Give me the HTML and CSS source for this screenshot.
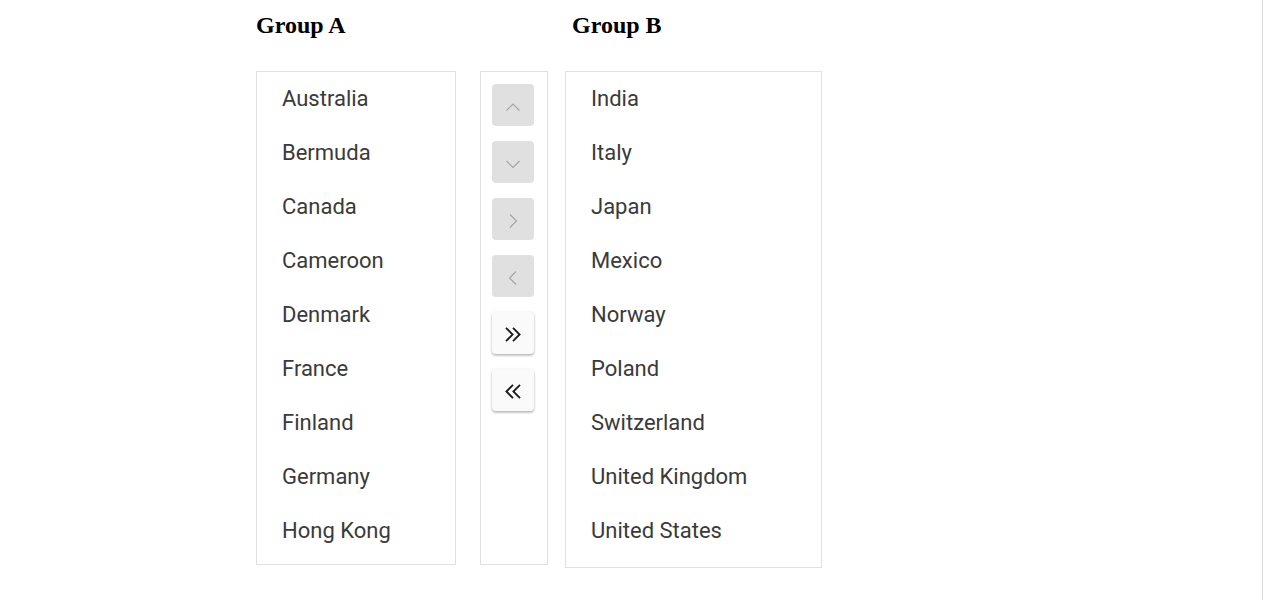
FILE: index.html
```html
<!DOCTYPE html>
<html>
<head>
<meta charset="utf-8">
<link rel="stylesheet" href="styles.css">
</head>
<body>
<div class="page">
  <div class="dual">
    <div class="col col-a">
      <h2 class="title">Group A</h2>
      <ul class="listbox list-a">
        <li>Australia</li>
        <li>Bermuda</li>
        <li>Canada</li>
        <li>Cameroon</li>
        <li>Denmark</li>
        <li>France</li>
        <li>Finland</li>
        <li>Germany</li>
        <li>Hong Kong</li>
      </ul>
    </div>
    <div class="toolbar">
      <button class="tb-btn disabled" aria-label="Move up">
        <svg class="ic" width="16" height="16" viewBox="0 0 16 16"><path d="M1.5 11.5 L8 5 L14.5 11.5" fill="none" stroke="#a3a3a3" stroke-width="1.1"/></svg>
      </button>
      <button class="tb-btn disabled" aria-label="Move down">
        <svg class="ic" width="16" height="16" viewBox="0 0 16 16"><path d="M1.5 5 L8 11.5 L14.5 5" fill="none" stroke="#a3a3a3" stroke-width="1.1"/></svg>
      </button>
      <button class="tb-btn disabled" aria-label="Move to">
        <svg class="ic" width="16" height="16" viewBox="0 0 16 16"><path d="M5 1.5 L11.5 8 L5 14.5" fill="none" stroke="#a3a3a3" stroke-width="1.1"/></svg>
      </button>
      <button class="tb-btn disabled" aria-label="Move from">
        <svg class="ic" width="16" height="16" viewBox="0 0 16 16"><path d="M11 1.5 L4.5 8 L11 14.5" fill="none" stroke="#a3a3a3" stroke-width="1.1"/></svg>
      </button>
      <button class="tb-btn" aria-label="Move all to">
        <svg class="ic" width="16" height="16" viewBox="0 0 16 16"><path d="M1 0.8 L7.6 7.5 L1 14.2 M8 0.8 L14.6 7.5 L8 14.2" fill="none" stroke="#1a1a1a" stroke-width="1.8"/></svg>
      </button>
      <button class="tb-btn" aria-label="Move all from">
        <svg class="ic" width="16" height="16" viewBox="0 0 16 16"><path d="M8 0.8 L1.4 7.5 L8 14.2 M15 0.8 L8.4 7.5 L15 14.2" fill="none" stroke="#1a1a1a" stroke-width="1.8"/></svg>
      </button>
    </div>
    <div class="col col-b">
      <h2 class="title title-b">Group B</h2>
      <ul class="listbox list-b">
        <li>India</li>
        <li>Italy</li>
        <li>Japan</li>
        <li>Mexico</li>
        <li>Norway</li>
        <li>Poland</li>
        <li>Switzerland</li>
        <li>United Kingdom</li>
        <li>United States</li>
      </ul>
    </div>
  </div>
</div>
</body>
</html>
```

FILE: styles.css
```css
html, body {
  margin: 0;
  padding: 0;
  background: #ffffff;
}

.page {
  width: 1262px;
  height: 600px;
  border-right: 1px solid #dcdcdc;
  box-sizing: content-box;
}

.dual {
  display: flex;
  align-items: flex-start;
  padding-left: 256px;
}

.col {
  display: flex;
  flex-direction: column;
}

.col-a {
  width: 200px;
}

.col-b {
  width: 257px;
  margin-left: 17px;
}

.title {
  margin: 0;
  height: 71px;
  padding-top: 10px;
  box-sizing: border-box;
  font-family: "Liberation Serif", "Times New Roman", serif;
  font-weight: bold;
  font-size: 24px;
  line-height: 30px;
  color: #000;
}

.title-b {
  padding-left: 7px;
}

.listbox {
  list-style: none;
  margin: 0;
  padding: 0 0 6px 0;
  border: 1px solid #e0e0e0;
  font-family: Roboto, "Liberation Sans", sans-serif;
  font-size: 22px;
  color: #3a3a3a;
}

.list-b {
  padding-bottom: 9px;
}

.listbox li {
  height: 54px;
  line-height: 53px;
  padding-bottom: 1px;
  box-sizing: border-box;
  padding-left: 25px;
}

.toolbar {
  margin-top: 71px;
  margin-left: 24px;
  width: 68px;
  height: 494px;
  box-sizing: border-box;
  border: 1px solid #e0e0e0;
  padding: 12px 0 0 11px;
  display: flex;
  flex-direction: column;
  gap: 15px;
}

.tb-btn {
  width: 42px;
  height: 42px;
  padding: 0;
  border: none;
  border-radius: 4px;
  background: #fafafa;
  box-shadow: 0 1px 3px rgba(0, 0, 0, 0.22), 0 2px 2px rgba(0, 0, 0, 0.12);
  display: flex;
  align-items: center;
  justify-content: center;
}

.tb-btn.disabled {
  background: #e0e0e0;
  box-shadow: none;
}

.ic {
  display: block;
  margin-top: 3px;
}
```
